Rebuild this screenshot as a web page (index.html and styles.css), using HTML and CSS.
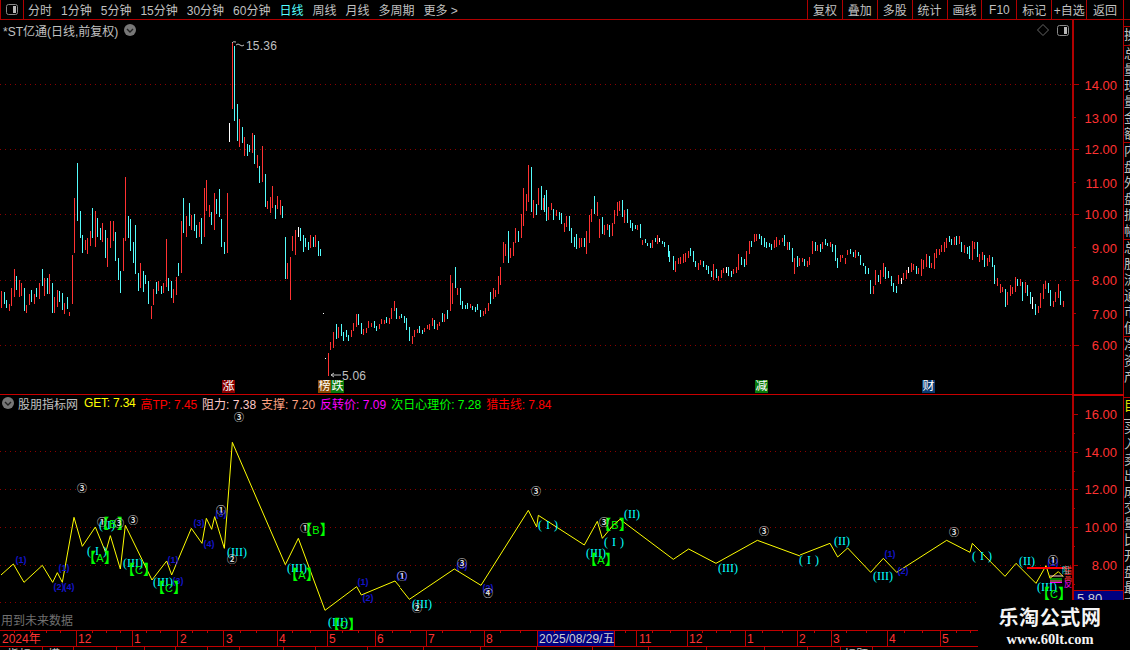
FILE: index.html
```html
<!DOCTYPE html>
<html lang="zh-CN">
<head>
<meta charset="utf-8">
<title>*ST亿通 日线</title>
<link rel="stylesheet" href="styles.css">
</head>
<body>
<div class="app">
  <header class="topbar">
    <div class="toggle"><svg class="ico" viewBox="0 0 12 11"><rect x=".5" y=".5" width="11" height="10" rx="2" class="ico-box"/><rect x="7" y="2" width="3" height="7" class="ico-fill"/></svg></div>
    <nav class="periods">
      <span>分时</span><span>1分钟</span><span>5分钟</span><span>15分钟</span><span>30分钟</span><span>60分钟</span><span class="active">日线</span><span>周线</span><span>月线</span><span>多周期</span><span>更多 &gt;</span>
    </nav>
    <nav class="tools">
      <span>复权</span><span>叠加</span><span>多股</span><span>统计</span><span>画线</span><span>F10</span><span>标记</span><span>+自选</span><span class="last">返回</span>
    </nav>
  </header>

  <div class="work">
    <div class="panes">
      <section class="pane pane-main">
        <svg class="canvas" viewBox="0 20 1072 375">
          <g class="grid">
            <path d="M0 84.5H1072M0 149.5H1072M0 214.5H1072M0 280.5H1072M0 345.5H1072"/>
          </g>
          <path class="red" d="M232.5 42V109M239.5 119V147M244.5 137V156M252.5 133V153M257.5 155V168M262.5 146V182M328.5 353V376"/>
          <path class="cyan" d="M234.5 46V121M237.5 104V141M242.5 127V143M247.5 144V156M249.5 145V152M254.5 135V164M259.5 166V183"/>
          <path class="white" d="M229.5 123V142M323 313h1M325 358h1"/>
          <g transform="translate(0 150) scale(.33333)">
            <path class="red t" d="M4 424V473M28 462V483M34 415V467M43 357V440M58 390V440M64 400V437M79 465V488M88 432V464M103 432V461M118 400V446M133 385V437M148 373V431M163 442V488M172 420V472M193 460V491M208 485V497M217 316V461M223 145V308M256 270V300M262 265V311M271 244V287M286 184V290M307 220V275M322 265V350M331 213V293M340 213V272M370 265V362M376 82V272M421 340V413M454 468V506M460 418V464M475 394V422M490 400V428M499 268V410M520 418V458M529 381V434M544 213V369M559 199V260M574 196V240M598 217V262M613 115V261M619 91V182M628 166V200M643 130V239M682 130V309M802 154V176M811 142V189M817 109V173M832 139V176M841 151V196M862 340V388M871 322V449M877 259V302M886 241V314M931 256V293M946 256V292"/>
            <path class="cyan t" d="M13 427V463M19 451V473M49 379V421M73 415V482M94 421V456M109 415V441M127 358V407M142 385V431M157 400V488M178 424V456M187 430V479M202 442V476M232 40V212M241 184V263M247 256V308M277 175V263M292 205V260M301 235V270M316 241V323M346 247V332M355 325V389M361 364V428M385 199V263M391 208V302M400 277V338M406 226V371M415 370V422M430 364V425M436 376V401M445 394V461M469 397V431M484 409V431M505 385V422M514 394V443M535 340V377M550 145V248M568 160V227M583 193V242M589 226V263M604 205V281M634 187V224M649 148V191M658 118V200M664 208V290M673 277V311M796 73V170M826 166V206M847 169V203M856 262V386M901 235V272M910 256V305M916 265V290M925 277V299M940 262V292M955 274V317M961 298V317"/>
            <path class="white t" d="M895 232V260"/>
          </g>
          <g transform="translate(320 155) scale(.33333)">
            <path class="red t" d="M31 560V585M40 530V580M55 515V548M94 525V545M100 504V527M109 477V517M130 521V540M139 519V533M145 499V519M154 503V516M178 507V522M184 492V508M193 494V507M208 489V506M214 459V492M223 438V467M238 482V491M277 543V567M283 525V546M292 522V534M313 518V531M322 510V523M328 507V525M337 489V513M352 507V525M358 501V513M373 477V501M391 360V467M397 385V446M412 399V420M451 448V460M490 468V484M496 460V477M505 444V467M520 399V432M526 405V426M535 363V417M541 336V389M550 262V323M556 268V303M571 280V308M580 262V303M586 220V264M604 178V249M610 100V212M619 118V167M625 31V140M640 136V188M655 100V149M670 130V165M685 157V195M694 145V166M709 166V184M733 205V231M739 184V215M778 250V279M784 250V275M799 229V296M808 180V264M814 163V200M832 142V183M838 193V248M853 211V239M862 208V225M877 205V243M883 166V207M892 142V183M898 139V169M913 166V205M952 211V225M967 256V270M997 256V279M1012 241V266"/>
            <path class="cyan t" d="M49 508V551M64 508V544M70 532V558M79 526V546M85 541V558M115 478V511M124 505V537M163 499V519M169 514V528M199 487V504M229 460V491M244 478V490M253 484V505M259 490V525M268 517V558M298 514V534M307 526V537M343 496V522M367 475V501M382 466V492M406 337V399M421 400V450M427 439V461M436 451V461M442 445V461M457 454V465M466 457V471M472 448V466M481 466V486M511 412V447M565 229V323M595 229V262M634 37V171M649 148V180M664 94V166M673 121V172M679 106V198M700 163V195M718 172V195M724 175V207M748 184V227M754 220V264M763 247V276M769 238V282M793 250V276M823 124V177M847 187V238M868 211V246M907 136V187M922 163V205M931 196V219M937 205V228M946 211V222M961 208V249M976 253V264M982 265V273M991 265V279M1006 250V261"/>
          </g>
          <g transform="translate(640 210) scale(.33333)">
            <path class="red t" d="M106 153V186M115 144V162M121 141V162M130 132V159M136 129V156M145 123V144M175 159V180M181 150V165M220 162V211M235 198V213M244 180V204M250 174V189M280 177V192M289 171V189M295 132V180M319 123V165M328 93V132M343 72V96M349 72V93M403 90V114M409 81V111M418 90V105M427 84V96M442 96V120M463 144V192M478 144V168M487 144V156M502 153V171M508 141V165M517 93V132M532 105V123M547 96V117M571 96V111M601 135V156M607 135V144M616 144V162M622 120V135M646 120V144"/>
            <path class="cyan t" d="M67 93V102M75 96V111M85 105V141M90 123V156M100 138V180M151 114V138M160 123V156M166 153V171M190 153V171M199 165V180M205 168V192M214 183V201M229 177V204M265 171V198M274 183V201M304 141V165M313 147V171M334 93V111M358 72V87M364 78V105M373 84V111M379 96V114M388 99V111M394 102V120M433 75V108M448 96V120M457 114V156M472 138V171M493 147V168M526 96V123M541 102V126M556 87V105M562 99V108M577 102V126M586 105V153M592 144V174M631 117V132M640 126V141M655 126V138"/>
            <path class="white t" d="M60 84V96M259 171V189"/>
          </g>
          <g transform="translate(860 225) scale(.33333)">
            <path class="red t" d="M40 183V207M46 135V180M61 135V177M70 114V156M115 150V177M130 144V165M139 135V162M154 114V141M160 117V135M175 129V147M184 102V153M190 105V132M199 87V126M214 114V129M223 84V132M229 72V99M238 72V90M244 60V81M253 51V81M259 39V69M283 36V60M298 33V57M313 60V84M337 48V105M343 51V72M358 87V111M367 81V105M382 99V123M388 90V111M412 159V183M421 177V204M427 186V201M442 201V240M451 180V213M457 186V207M466 156V201M481 162V183M496 171V204M535 243V264M541 204V249M550 177V222M556 168V192M580 228V246M586 201V231M595 177V219M610 228V246"/>
            <path class="cyan t" d="M1 90V120M10 114V123M16 123V147M25 129V147M31 165V207M55 150V171M76 126V162M85 138V159M94 153V183M100 174V201M109 183V204M169 123V147M208 93V129M268 33V51M274 42V60M289 33V60M304 51V81M322 66V87M328 63V102M352 51V96M373 90V126M397 96V126M403 120V177M436 192V246M472 162V183M487 171V228M502 180V213M511 201V237M526 237V270M565 174V204M571 195V243M601 198V240"/>
            <path class="white t" d="M124 159V177M145 126V144M517 216V252"/>
          </g>
          <path class="note-line" d="M232 43q1-2 4-1M236 45q2-2 4 0t4 0M331 375h10M331 375l3-2M331 375l3 2"/>
          <text class="note" x="246" y="50">15.36</text>
          <text class="note" x="342" y="380">5.06</text>
        </svg>
        <div class="title">
          <span>*ST亿通(日线,前复权)</span>
          <svg class="disc" viewBox="0 0 12 12"><circle cx="6" cy="6" r="6" class="disc-bg"/><path d="M3 5l3 3 3-3" class="disc-mark"/></svg>
        </div>
        <div class="corner">
          <svg class="diamond" viewBox="0 0 12 12"><path d="M6 .5L11.500 6 6 11.500 .5 6z"/></svg>
          <svg class="ico" viewBox="0 0 12 11"><rect x=".5" y=".5" width="11" height="10" rx="2" class="ico-box"/><rect x="7" y="2" width="3" height="7" class="ico-fill"/></svg>
        </div>
        <span class="tag tag-up" >涨</span>
        <span class="tag tag-bang">榜</span>
        <span class="tag tag-down">跌</span>
        <span class="tag tag-cut">减</span>
        <span class="tag tag-fin">财</span>
      </section>

      <section class="pane pane-sub">
        <svg class="canvas" viewBox="0 395 1072 235">
          <g class="grid">
            <path d="M0 451.500H1072M0 489.500H1072M0 527.500H1072M0 565.500H1072M0 602.500H1072"/>
          </g>
          <g transform="translate(0 410) scale(.33333)">
            <polyline class="wave t" points="3,495 40,462 72,517 127,466 158,517 172,488 187,517 222,322 247,409 286,351 317,427 331,377 361,477 376,346 456,510 500,453 515,495 574,355 606,400 619,325 635,358 644,320 673,415 697,97 856,464 895,385 975,601 1070,530 1084,555 1185,513 1200,531"/>
          </g>
          <g transform="translate(400 480) scale(.33333)">
            <polyline class="wave t" points="0,323 28,358 163,267 243,316 385,91 410,141 415,106 553,195 592,124 607,175 640,135 660,118 820,238 866,207 948,250 1072,181 1200,228"/>
          </g>
          <g transform="translate(800 480) scale(.33333)">
            <polyline class="wave t" points="0,225 90,190 113,231 143,204 212,277 250,235 290,277 440,181 510,217 517,190 615,289 648,250 708,310 738,257 750,295 775,275 790,290"/>
          </g>

          <g class="lb-blue">
            <text x="21" y="563">(1)</text><text x="59" y="590">(2)</text><text x="69" y="590">(4)</text><text x="64" y="571">(1)</text><text x="199" y="526">(3)</text><text x="209" y="547">(4)</text><text x="221" y="517">(3)</text><text x="173" y="563">(1)</text><text x="178" y="584">(3)</text><text x="363" y="585">(1)</text><text x="368" y="601">(2)</text><text x="402" y="579">(1)</text><text x="462" y="569">(3)</text><text x="488" y="591">(2)</text><text x="890" y="557">(1)</text><text x="903" y="574">(2)</text><text x="1053" y="566">(1)</text>
          </g>
          <g class="lb-cyan">
            <text x="97" y="555">( I )</text><text x="107" y="529">(II)</text><text x="133" y="567">(III)</text><text x="163" y="586">(III)</text><text x="237" y="556">(III)</text><text x="297" y="572">(III)</text><text x="338" y="626">(III)</text><text x="422" y="608">(III)</text><text x="548" y="529">( I )</text><text x="596" y="557">(III)</text><text x="614" y="546">( I )</text><text x="632" y="518">(II)</text><text x="728" y="572">(III)</text><text x="809" y="564">( I )</text><text x="842" y="545">(II)</text><text x="883" y="580">(III)</text><text x="982" y="560">( I )</text><text x="1027" y="565">(II)</text><text x="1047" y="591">(III)</text>
          </g>
          <g class="lb-green">
            <text x="100" y="562">【<tspan>A</tspan>】</text><text x="113" y="528">【<tspan>B</tspan>】</text><text x="139" y="574">【<tspan>C</tspan>】</text><text x="169" y="592">【<tspan>C</tspan>】</text><text x="316" y="534">【<tspan>B</tspan>】</text><text x="302" y="579">【<tspan>A</tspan>】</text><text x="344" y="629">【<tspan>C</tspan>】</text><text x="615" y="529">【<tspan>B</tspan>】</text><text x="601" y="564">【<tspan>A</tspan>】</text><text x="1054" y="598">【<tspan>C</tspan>】</text>
          </g>
          <g class="lb-ring">
            <text x="82" y="492">③</text><text x="102" y="526">①</text><text x="119" y="527">③</text><text x="133" y="524">③</text><text x="239" y="421">③</text><text x="221" y="514">①</text><text x="232" y="563">②</text><text x="305" y="532">①</text><text x="402" y="580">①</text><text x="536" y="495">③</text><text x="462" y="567">③</text><text x="488" y="597">④</text><text x="604" y="526">③</text><text x="764" y="535">③</text><text x="417" y="612">②</text><text x="954" y="536">③</text><text x="1053" y="564">①</text>
          </g>
          <g class="cluster">
            <path class="lv-red" d="M1027 568H1066"/>
            <path class="lv-pink" d="M1050 576H1063"/>
            <path class="lv-green" d="M1050 579H1062"/>
            <path class="lv-salmon" d="M1050 581H1062"/>
            <path class="lv-magenta" d="M1050 582.500H1062"/>
            <text class="cl-cyan" x="1062" y="573">阻</text>
            <text class="cl-red" x="1064" y="573">猎</text>
            <text class="cl-red" x="1064" y="581">高</text>
            <text class="cl-magenta" x="1064" y="587">反</text>
          </g>
        </svg>
        <div class="legend">
          <svg class="disc" viewBox="0 0 12 12"><circle cx="6" cy="6" r="6" class="disc-bg"/><path d="M3 5l3 3 3-3" class="disc-mark"/></svg>
          <span class="lg-name">股朋指标网</span>
          <span class="lg-yellow">GET: 7.34</span>
          <span class="lg-red">高TP: 7.45</span>
          <span class="lg-pink">阻力: 7.38</span>
          <span class="lg-salmon">支撑: 7.20</span>
          <span class="lg-magenta">反转价: 7.09</span>
          <span class="lg-green">次日心理价: 7.28</span>
          <span class="lg-red">猎击线: 7.84</span>
        </div>
        <span class="future">用到未来数据</span>
      </section>

      <svg class="timeline" viewBox="0 630 1072 20">
        <rect class="date-bg" x="537" y="631" width="77" height="16"/>
        <path class="tl-line" d="M0 630.500H1072M0 646.500H1072"/>
        <path class="tl-line" d="M76.500 630V647M132.500 630V647M177.500 630V647M223.500 630V647M277.500 630V647M327.500 630V647M375.500 630V647M426.500 630V647M484.500 630V647M537 630V647M614 630V647M636.500 630V647M687.500 630V647M745.500 630V647M797.500 630V647M831.500 630V647M887.500 630V647M940.500 630V647"/>
        <path class="tl-line" d="M14.500 630v3M30.500 630v3M46.500 630v3M60.500 630v3M92.500 630v3M106.500 630v3M120.500 630v3M146.500 630v3M160.500 630v3M192.500 630v3M207.500 630v3M240.500 630v3M256.500 630v3M292.500 630v3M310.500 630v3M342.500 630v3M358.500 630v3M392.500 630v3M410.500 630v3M442.500 630v3M470.500 630v3M500.500 630v3M520.500 630v3M554.500 630v3M570.500 630v3M590.500 630v3M625.500 630v3M652.500 630v3M670.500 630v3M702.500 630v3M716.500 630v3M730.500 630v3M762.500 630v3M782.500 630v3M814.500 630v3M846.500 630v3M866.500 630v3M904.500 630v3M922.500 630v3M956.500 630v3M970.500 630v3"/>
        <path class="tl-line" d="M42.500 647v3M73.500 647v3M116.500 647v3M144.500 647v3M175.500 647v3M207.500 647v3M239.500 647v3M283.500 647v3M315.500 647v3M367.500 647v3M423.500 647v3M480.500 647v3M536.500 647v3M592.500 647v3M648.500 647v3M706.500 647v3M764.500 647v3M807.500 647v3M840.500 647v3M872.500 647v3"/>
        <g class="tl-text">
          <text x="2" y="643">2024年</text><text x="78" y="643">12</text><text x="134" y="643">1</text><text x="180" y="643">2</text><text x="226" y="643">3</text><text x="279" y="643">4</text><text x="329" y="643">5</text><text x="377" y="643">6</text><text x="428" y="643">7</text><text x="486" y="643">8</text><text x="639" y="643">11</text><text x="689" y="643">12</text><text x="747" y="643">1</text><text x="799" y="643">2</text><text x="833" y="643">3</text><text x="889" y="643">4</text><text x="942" y="643">5</text>
        </g>
        <text class="date-text" x="539" y="643">2025/08/29/五</text>
        <g class="tl-clip">
          <text x="7" y="659">指标</text><text x="48" y="659">模</text><text x="844" y="659">标</text><text x="856" y="659">题</text>
        </g>
      </svg>
    </div>

    <svg class="axis" viewBox="1072 20 52 630">
      <path class="ax-line" d="M1073 20V650M1123.500 20V650"/>
      <path class="ax-top" d="M1072 395H1124"/>
      <path class="ax-line" d="M1073 84.500h6M1073 117.500h3M1073 149.500h6M1073 182.500h3M1073 214.500h6M1073 247.500h3M1073 280.500h6M1073 313.500h3M1073 345.500h6"/>
      <path class="ax-line" d="M1073 414.500h5M1073 433.500h2M1073 452.500h5M1073 471.500h2M1073 489.500h5M1073 508.500h2M1073 527.500h5M1073 546.500h2M1073 565.500h5M1073 584.500h2"/>
      <g class="ax-text">
        <text x="1117" y="90">14.00</text><text x="1117" y="123">13.00</text><text x="1117" y="154">12.00</text><text x="1117" y="188">11.00</text><text x="1117" y="219">10.00</text><text x="1117" y="253">9.00</text><text x="1117" y="285">8.00</text><text x="1117" y="319">7.00</text><text x="1117" y="350">6.00</text>
        <text x="1117" y="419">16.00</text><text x="1117" y="457">14.00</text><text x="1117" y="494">12.00</text><text x="1117" y="532">10.00</text><text x="1117" y="570">8.00</text>
      </g>
      <rect class="ax-box" x="1074" y="591" width="49" height="15"/>
      <path class="ax-line" d="M1073 590.500H1123"/>
      <text class="ax-box-text" x="1077" y="603">5.80</text>
    </svg>

    <aside class="strip">
      <div></div>
      <div class="st">换手</div>
      <div class="st">总量现量金额</div>
      <div class="st">内盘外盘振幅</div>
      <div class="st">总股流通市值</div>
      <div class="st">净资产</div>
      <div class="st st-yellow">目</div>
      <div class="st st-light">买入卖出成交量比开盘最高</div>
    </aside>
  </div>

  <div class="mark">
    <strong class="mark-name">乐淘公式网</strong>
    <span class="mark-url">www.60lt.com</span>
  </div>
</div>
</body>
</html>
```

FILE: styles.css
```css
* { box-sizing: border-box; margin: 0; padding: 0; }
html, body { background: #000; overflow: hidden; }
body { font: 12px "Liberation Sans", "Noto Sans CJK SC", sans-serif; color: #c0c0c0; }

.app { position: relative; width: 1130px; height: 650px; display: flex; flex-direction: column; overflow: hidden; background: #000; }

/* top bar */
.topbar { flex: 0 0 20px; display: flex; align-items: stretch; border-bottom: 1px solid #b00000; }
.toggle { width: 24px; display: flex; align-items: center; justify-content: center; border-right: 1px solid #b00000; border-left: 1px solid #b00000; }
.periods { display: flex; align-items: center; gap: 9px; padding-left: 4px; flex: 1; white-space: nowrap; }
.periods .active { color: #54ffff; }
.tools { display: flex; width: 323px; }
.tools span { width: 35px; display: flex; align-items: center; justify-content: center; border-left: 1px solid #b00000; white-space: nowrap; }
.tools .last { width: 38px; border-right: 1px solid #b00000; margin-right: 6px; }

.ico { width: 12px; height: 11px; display: block; }
.ico-box { fill: none; stroke: #8a8a8a; }
.ico-fill { fill: #b8b8b8; }

/* main area */
.work { flex: 1; display: flex; min-height: 0; }
.panes { width: 1072px; flex: none; display: flex; flex-direction: column; }
.pane { position: relative; }
.pane-main { height: 375px; border-bottom: 1px solid #c80000; }
.pane-sub { height: 235px; }
.canvas { position: absolute; inset: 0; width: 100%; height: 100%; display: block; }
.pane-main .canvas { height: 375px; }

.grid path { fill: none; stroke: #8c0000; stroke-width: 1; stroke-dasharray: 1 4; shape-rendering: crispEdges; }
.red, .cyan, .white { fill: none; stroke-width: 1; shape-rendering: crispEdges; }
.red { stroke: #ff3232; }
.cyan { stroke: #54fcfc; }
.white { stroke: #fff; }
.t { stroke-width: 3; }
.note-line { fill: none; stroke: #c0c0c0; stroke-width: 1; }
.note { fill: #c0c0c0; font-size: 12px; letter-spacing: .2px; }

.title { position: absolute; left: 3px; top: 1px; display: flex; align-items: center; gap: 6px; height: 18px; white-space: nowrap; }
.disc { width: 12px; height: 12px; display: block; flex: none; }
.disc-bg { fill: #777; }
.disc-mark { fill: none; stroke: #222; stroke-width: 1.4; }
.corner { position: absolute; right: 3px; top: 4px; display: flex; align-items: center; gap: 8px; }
.diamond { width: 12px; height: 12px; display: block; }
.diamond path { fill: none; stroke: #666; stroke-width: 1; }

.tag { position: absolute; top: 360px; width: 13px; height: 13px; font-size: 12px; line-height: 13px; text-align: center; color: #fff; overflow: hidden; }
.tag-up { left: 222px; background: #8a0000; }
.tag-bang { left: 318px; background: #8a4a00; }
.tag-down { left: 331px; background: #0a7a0a; }
.tag-cut { left: 755px; background: #0a7a0a; }
.tag-fin { left: 922px; background: #0a3a70; }

.legend { position: absolute; left: 2px; top: 0; height: 16px; display: flex; align-items: center; gap: 5px; white-space: nowrap; }
.legend .disc { margin-right: -1px; }
.lg-name { color: #c0c0c0; margin-right: 1px; }
.lg-yellow { color: #ffff00; letter-spacing: -.2px; }
.lg-red { color: #ff0000; letter-spacing: -.1px; }
.lg-pink { color: #ffc8c8; }
.lg-salmon { color: #ffa080; }
.lg-magenta { color: #ff00ff; }
.lg-green { color: #00ff00; }
.future { position: absolute; left: 1px; bottom: 1px; color: #707070; line-height: 16px; }

.wave { fill: none; stroke: #ffff00; stroke-linejoin: bevel; }

.lb-blue text { fill: #1414c8; font: bold 9px "Liberation Sans", sans-serif; text-anchor: middle; }
.lb-cyan text { fill: #00ffff; font: 12px "Liberation Serif", serif; text-anchor: middle; word-spacing: 1px; }
.lb-green text { fill: #00ff00; font: bold 14px "Noto Sans CJK SC", sans-serif; text-anchor: middle; }
.lb-green tspan { font: 11px "Liberation Sans", sans-serif; }
.lb-ring text { fill: #d8d8d8; font: bold 10px "Noto Sans CJK SC", sans-serif; text-anchor: middle; }

.lv-red { stroke: #ff0000; stroke-width: 2; fill: none; }
.lv-pink { stroke: #ffc8c8; stroke-width: 1; fill: none; }
.lv-green { stroke: #00ff00; stroke-width: 1; fill: none; }
.lv-salmon { stroke: #ffa080; stroke-width: 1; fill: none; }
.lv-magenta { stroke: #ff00ff; stroke-width: 1; fill: none; }
.cluster text { font: 8px "Noto Sans CJK SC", sans-serif; }
.cl-cyan { fill: #00ffff; }
.cl-red { fill: #ff3232; }
.cl-magenta { fill: #ff00ff; }

/* time axis */
.timeline { flex: 0 0 20px; width: 1072px; height: 20px; display: block; }
.tl-line { fill: none; stroke: #c00000; stroke-width: 1; shape-rendering: crispEdges; }
.tl-text text { fill: #ff3232; font-size: 12px; }
.date-bg { fill: #000080; }
.date-text { fill: #d0d0d0; font-size: 12px; }
.tl-clip text { fill: #c0c0c0; font-size: 12px; }

/* price axis */
.axis { width: 52px; flex: none; height: 630px; display: block; }
.ax-line { fill: none; stroke: #b00000; stroke-width: 1; shape-rendering: crispEdges; }
path.ax-line:first-child { stroke-width: 2; }
.ax-top { fill: none; stroke: #c80000; stroke-width: 2; shape-rendering: crispEdges; }
.ax-text text { fill: #ff3232; font-size: 13px; text-anchor: end; }
.ax-box { fill: #000080; }
.ax-box-text { fill: #d0d0d0; font-size: 13px; }

/* right clipped strip */
.strip { width: 6px; flex: none; display: grid; grid-template-rows: 6px 19px 97px 97px 97px 61px 22px 1fr; overflow: hidden; }
.st { width: 14px; font-size: 13px; line-height: 16px; border-top: 1px solid #b00000; color: #c0c0c0; overflow: hidden; }
.st-yellow { color: #e0e000; border-top-color: #b00000; }
.st-light { border-top-color: #c0c0c0; }

/* watermark */
.mark { position: absolute; left: 978px; top: 600px; width: 152px; height: 50px; background: #000; display: flex; flex-direction: column; align-items: center; padding-right: 8px; }
.mark-name { font: bold 20px/26px "Noto Sans CJK SC", sans-serif; color: #f4f4f4; letter-spacing: .6px; margin-top: 4px; white-space: nowrap; }
.mark-url { font: bold 14.500px/18px "Liberation Serif", serif; color: #f4f4f4; white-space: nowrap; }
```
